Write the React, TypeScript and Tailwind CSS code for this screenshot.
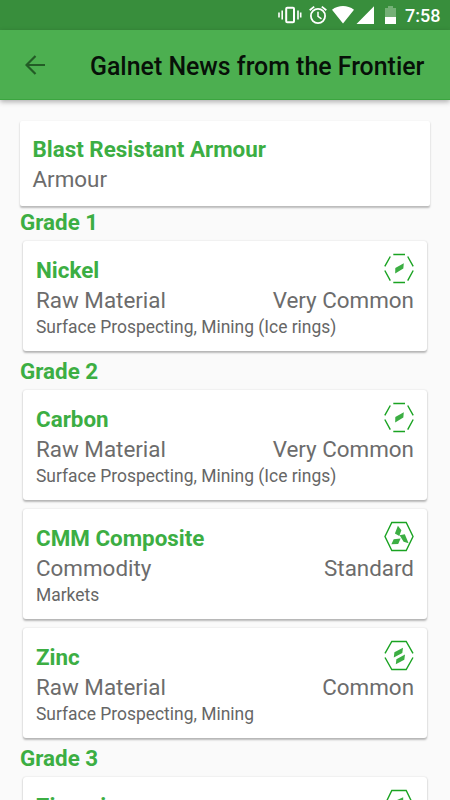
import React from "react";

type Rarity = "veryCommon" | "common" | "standard" | "commodity";

interface Material {
  name: string;
  kind: string;
  rarity: string;
  source: string;
  icon: Rarity;
}

const grades: { title: string; materials: Material[] }[] = [
  {
    title: "Grade 1",
    materials: [
      { name: "Nickel", kind: "Raw Material", rarity: "Very Common", source: "Surface Prospecting, Mining (Ice rings)", icon: "veryCommon" },
    ],
  },
  {
    title: "Grade 2",
    materials: [
      { name: "Carbon", kind: "Raw Material", rarity: "Very Common", source: "Surface Prospecting, Mining (Ice rings)", icon: "veryCommon" },
      { name: "CMM Composite", kind: "Commodity", rarity: "Standard", source: "Markets", icon: "commodity" },
      { name: "Zinc", kind: "Raw Material", rarity: "Common", source: "Surface Prospecting, Mining", icon: "common" },
    ],
  },
  {
    title: "Grade 3",
    materials: [
      { name: "Zirconium", kind: "Raw Material", rarity: "Standard", source: "Surface Prospecting, Mining", icon: "standard" },
    ],
  },
];

function RarityIcon({ type }: { type: Rarity }) {
  return (
    <svg className="h-[31px] w-[30px] shrink-0" viewBox="0 0 30 31" fill="none" stroke="#1aa322" strokeWidth="1.4">
      {type === "veryCommon" && (
        <>
          <path d="M9.3 1.5H21M9.3 29.5H21M6.3 3.5L.8 13.4M23.7 3.5L29.2 13.4M.8 17.5L6.3 27.6M29.2 17.5L23.7 27.6" />
          <path d="M11.3 15L19.8 10.3L19.3 15.6L11.2 20.4Z" fill="#3cae43" stroke="none" />
        </>
      )}
      {type === "common" && (
        <>
          <path d="M1 13.4L7.8 1.5H22.2L29 13.4M1 17.5L7.8 29.5H22.2L29 17.5" />
          <path d="M10.4 12.2L19 7.8L18.3 12.9L9.8 17.4Z M12.4 19.2L21 14.6L20.3 19.7L11.8 24.2Z" fill="#3cae43" stroke="none" />
        </>
      )}
      {type === "commodity" && (
        <>
          <path d="M1 15.5L7.8 1.5H22.2L29 15.5L22.2 29.5H7.8Z" />
          <path d="M13.9 4.8L17.4 9.2L15.3 15L10.9 12.4Z M15.6 14.2L20.8 13.2L24.6 22.2L19.6 20.8Z M9.7 18.2L16.6 17.6L14.2 23L7.4 23.2Z" fill="#3cae43" stroke="none" />
        </>
      )}
      {type === "standard" && (
        <>
          <path d="M1 15.5L7.8 1.5H22.2L29 15.5L22.2 29.5H7.8Z" />
          <path d="M10.8 12L19.2 8.3V13.3L10.8 17Z" fill="#3cae43" stroke="none" />
        </>
      )}
    </svg>
  );
}

function StatusBar() {
  return (
    <div className="flex h-[30px] items-center justify-end bg-[#388e3c] pr-[10px] text-white">
      <svg className="h-[30px] w-[130px]" viewBox="270 0 130 30" fill="none" stroke="#fff">
        <rect x="286.2" y="7.7" width="7.8" height="14.6" rx="1" strokeWidth="2" />
        <path d="M282.2 10.5V19.5M298 10.5V19.5M279 12.5V17.5M300.7 12.5V17.5" strokeWidth="1.6" />
        <circle cx="318" cy="16" r="7.1" strokeWidth="1.8" />
        <path d="M318 11.8V16.3L321.5 18.8" strokeWidth="1.5" />
        <path d="M309.7 10.3L314.2 6.6M326.3 10.3L321.8 6.6" strokeWidth="1.8" />
        <path d="M332 9.8C338.5 4.8 347.5 4.8 354 9.8L343 23.4Z M374 6.3V24H356.5Z" fill="#fff" stroke="none" />
        <path d="M385 8H388V6H393V8H396V17H385Z" fill="#fff" fillOpacity=".3" stroke="none" />
        <path d="M385 17H396V24H385Z" fill="#fff" stroke="none" />
      </svg>
      <span className="ml-[5px] mt-[2px] w-[35px] whitespace-nowrap text-[18px] font-medium leading-[28px]">7:58</span>
    </div>
  );
}

function MaterialCard({ item }: { item: Material }) {
  return (
    <article className="h-[109.5px] shrink-0 rounded-[3px] bg-white pl-[13px] pr-[12.5px] pt-[12px] shadow-[0_1.5px_2px_rgba(0,0,0,0.26),0_0_2px_rgba(0,0,0,0.1)]">
      <div className="flex h-[33px] items-start justify-between">
        <h3 className="text-[22.4px] font-bold leading-[34px] text-[#3cae43]">{item.name}</h3>
        <RarityIcon type={item.icon} />
      </div>
      <div className="flex justify-between text-[22.4px] leading-[28px] text-[#6c6c6c]">
        <span>{item.kind}</span>
        <span>{item.rarity}</span>
      </div>
      <p className="text-[17.45px] leading-[26px] text-[#666]">{item.source}</p>
    </article>
  );
}

export default function App() {
  return (
    <div className="flex h-[800px] w-[450px] flex-col overflow-hidden bg-[#fafafa] font-['Roboto',sans-serif]">
      <StatusBar />
      <header className="z-10 flex h-[70px] shrink-0 items-center border-b border-[#3ba53f] bg-[#4caf50] pl-[25px] shadow-[0_2px_5px_rgba(0,0,0,0.3)]">
        <svg className="h-5 w-5" viewBox="0 0 20 20" fill="none" stroke="#235c26" strokeWidth="2.2">
          <path d="M20 10H2M10.5 1L1.5 10L10.5 19" />
        </svg>
        <h1 className="ml-[45px] mt-[5px] whitespace-nowrap text-[24.9px] font-medium leading-8 text-[#071008]">Galnet News from the Frontier</h1>
      </header>
      <main className="flex min-h-0 flex-1 flex-col overflow-hidden px-5 pt-[21px]">
        <section className="h-[85px] shrink-0 rounded-[2px] bg-white px-[12.5px] pt-[13px] shadow-[0_1.5px_2px_rgba(0,0,0,0.26)]">
          <h2 className="text-[22.4px] font-bold leading-[31px] text-[#3cae43]">Blast Resistant Armour</h2>
          <p className="text-[22.4px] leading-[28px] text-[#6c6c6c]">Armour</p>
        </section>
        {grades.map((grade) => (
          <section key={grade.title} className="shrink-0 pb-[4.5px]">
            <h2 className="h-[35px] text-[22.4px] font-bold leading-[33px] text-[#3cae43]">{grade.title}</h2>
            <div className="flex flex-col gap-[9.5px] pl-[3px] pr-[3.5px]">
              {grade.materials.map((item) => (
                <MaterialCard key={item.name} item={item} />
              ))}
            </div>
          </section>
        ))}
      </main>
    </div>
  );
}
